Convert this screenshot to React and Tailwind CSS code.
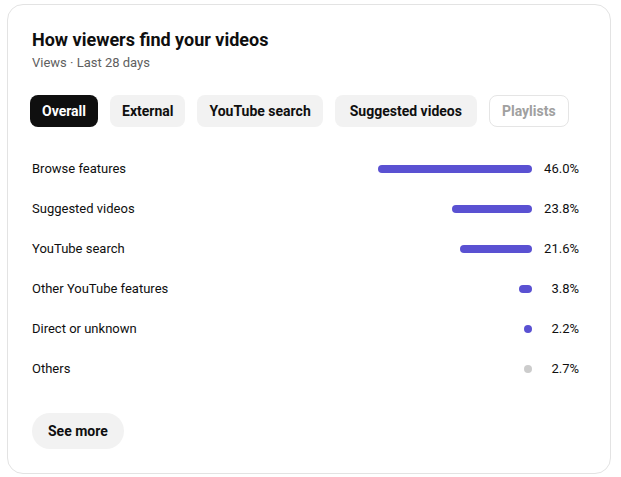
import React from "react";

const tabs = [
  { label: "Overall", cls: "h-8 px-3 rounded-lg bg-[#0f0f0f] text-white text-sm font-bold flex items-center" },
  { label: "External", cls: "h-8 px-3 rounded-lg bg-[#f2f2f2] text-[#0f0f0f] text-sm font-bold flex items-center" },
  { label: "YouTube search", cls: "h-8 px-3 rounded-lg bg-[#f2f2f2] text-[#0f0f0f] text-sm font-bold flex items-center" },
  { label: "Suggested videos", cls: "h-8 px-[15px] rounded-lg bg-[#f2f2f2] text-[#0f0f0f] text-sm font-bold flex items-center" },
  { label: "Playlists", cls: "h-8 px-3 rounded-lg border border-[#e5e5e5] text-[#a0a0a0] text-sm font-bold flex items-center" },
];

const rows = [
  { label: "Browse features", pct: 46.0, color: "bg-[#5a51d2]" },
  { label: "Suggested videos", pct: 23.8, color: "bg-[#5a51d2]" },
  { label: "YouTube search", pct: 21.6, color: "bg-[#5a51d2]" },
  { label: "Other YouTube features", pct: 3.8, color: "bg-[#5a51d2]" },
  { label: "Direct or unknown", pct: 2.2, color: "bg-[#5a51d2]" },
  { label: "Others", pct: 2.7, color: "bg-[#cccccc]", dot: true },
];

export default function App() {
  return (
    <div className="w-[621px] h-[477px] bg-white pt-[4px] pl-[7px]" style={{ fontFamily: "Roboto, 'Liberation Sans', sans-serif" }}>
      <div className="w-[604px] h-[470px] border border-[#e3e3e3] rounded-2xl px-6 pt-[21px] text-[#0f0f0f]">
        <h2 className="text-[18px] leading-[27px] font-bold">How viewers find your videos</h2>
        <div className="text-[13px] leading-5 text-[#606060]">Views · Last 28 days</div>
        <div className="flex gap-3 mt-[22px] -ml-0.5">
          {tabs.map((t) => (
            <div key={t.label} className={t.cls}>
              {t.label}
            </div>
          ))}
        </div>
        <div className="mt-[22px]">
          {rows.map((r) => (
            <div key={r.label} className="h-10 flex items-center text-[13px]">
              <div className="flex-1">{r.label}</div>
              <div className="flex justify-end w-[200px]">
                <div
                  className={`h-2 rounded-full ${r.color}`}
                  style={{ width: r.dot ? 8 : Math.max(8, r.pct * 3.35) }}
                />
              </div>
              <div className="w-[47px] text-right">{r.pct.toFixed(1)}%</div>
              <div className="w-[7px]" />
            </div>
          ))}
        </div>
        <button className="mt-[24px] h-9 px-4 rounded-full bg-[#f2f2f2] text-sm font-bold text-[#0f0f0f]">
          See more
        </button>
      </div>
    </div>
  );
}
